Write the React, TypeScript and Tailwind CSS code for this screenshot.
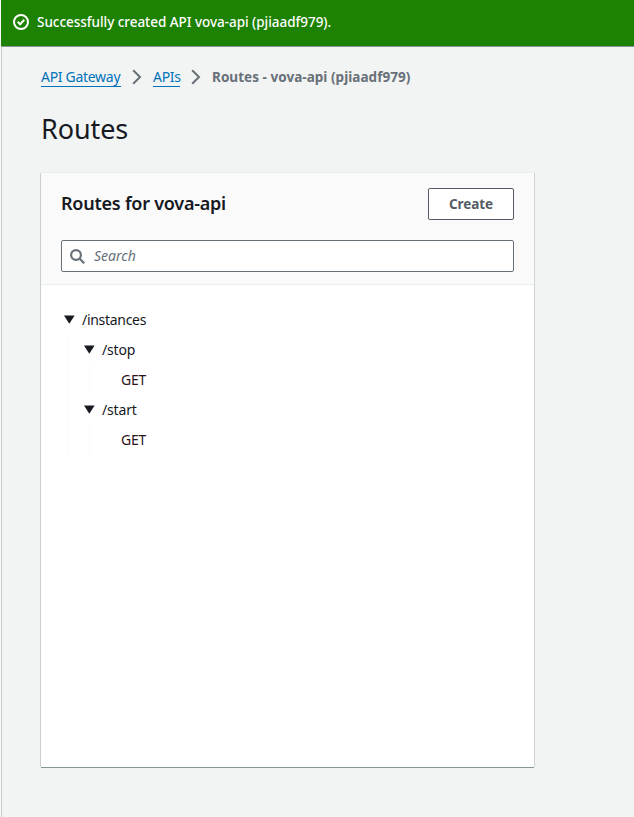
import type { ReactNode } from "react";

function Chevron() {
  return (
    <svg className="h-4 w-[10px] shrink-0" viewBox="0 0 10 16" fill="none" stroke="#687078" strokeWidth="2">
      <path d="M1.2 1.2 8 8l-6.8 6.8" />
    </svg>
  );
}

function Caret() {
  return (
    <svg className="mt-px h-[9px] w-[11px] shrink-0" viewBox="0 0 11 9" fill="#16191f">
      <path d="M0 .5h10.6L5.3 8.8z" />
    </svg>
  );
}

function Row({ children }: { children: ReactNode }) {
  return <div className="flex h-[30px] items-center gap-[7px] whitespace-nowrap">{children}</div>;
}

function Branch({ name }: { name: string }) {
  return (
    <div>
      <Row>
        <Caret />
        <span className="tracking-[-0.15px]">{name}</span>
      </Row>
      <div className="ml-[5px] border-l border-[#fafafa] pl-[31px]">
        <Row>
          <span className="tracking-[-0.2px] text-[#2b1419]">GET</span>
        </Row>
      </div>
    </div>
  );
}

export default function App() {
  return (
    <div className="h-[817px] w-[634px] overflow-hidden bg-[#f8f9f9] pl-px font-['Noto_Sans',sans-serif] text-[14px] text-[#16191f]">
      <div className="h-full border-l border-[#c8cccc] bg-[#f2f3f3]">
        <header className="-ml-px flex h-[47px] items-center gap-2 border-b border-[#879596] bg-[#1d8102] pb-[2px] pl-3 text-white">
          <svg className="h-4 w-4 shrink-0" viewBox="0 0 16 16" fill="none" stroke="white" strokeWidth="2">
            <circle cx="8" cy="8" r="7" />
            <path d="m4.7 7.8 2.4 2.4 4.2-4.4" />
          </svg>
          <span className="whitespace-nowrap text-[13.5px] font-medium tracking-[-0.04px]">
            Successfully created API vova-api (pjiaadf979).
          </span>
        </header>
        <nav className="flex h-[60px] items-center whitespace-nowrap pl-[39px]">
          <a className="mt-px h-[19px] w-[80px] border-b border-[#0073bb] leading-[18px] tracking-[-0.3px] text-[#0073bb]">API Gateway</a>
          <span className="mx-[11px] flex"><Chevron /></span>
          <a className="mt-px h-[19px] w-[27px] border-b border-[#0073bb] leading-[18px] tracking-[-0.3px] text-[#0073bb]">APIs</a>
          <span className="mx-[11px] flex"><Chevron /></span>
          <span className="text-[13.5px] font-bold leading-[18px] tracking-[0.04px] text-[#687078]">Routes - vova-api (pjiaadf979)</span>
        </nav>
        <h1 className="ml-[39px] mt-[4px] h-[36px] text-[27px] leading-[36px] tracking-[-0.1px]">Routes</h1>
        <section className="ml-[39px] mt-[26px] h-[594px] w-[493px] bg-white shadow-[0_1px_0_#879596,-1px_0_0_#c9d0d0,1px_0_0_#d0d6d6,0_-1px_0_#eaeded]">
          <div className="h-[112px] border-b border-[#eaeded] bg-[#fafafa] px-5 pt-[15px]">
            <div className="flex items-start justify-between">
              <h2 className="whitespace-nowrap text-[18px] font-semibold leading-[30px] tracking-[-0.24px]">Routes for vova-api</h2>
              <button className="h-8 w-[86px] rounded-[2px] border border-[#545b64] bg-white text-[13.5px] font-bold leading-[30px] tracking-[-0.1px] text-[#545b64]">Create</button>
            </div>
            <div className="mt-5 flex h-8 items-center gap-[9px] rounded-[2px] border border-[#687078] bg-white pl-2 text-[#687078]">
              <svg className="h-[15px] w-[15px]" viewBox="0 0 15 15" fill="none" stroke="#687078" strokeWidth="2.2">
                <circle cx="6" cy="6" r="4.9" />
                <path d="m9.5 9.5 4.8 4.8" />
              </svg>
              <span className="pb-[2px] italic">Search</span>
            </div>
          </div>
          <div className="pl-[23px] pt-[19px]">
            <Row>
              <Caret />
              <span className="tracking-[-0.3px]">/instances</span>
            </Row>
            <div className="ml-[4px] border-l border-[#fafafa] pl-[15px]">
              <Branch name="/stop" />
              <Branch name="/start" />
            </div>
          </div>
        </section>
      </div>
    </div>
  );
}
